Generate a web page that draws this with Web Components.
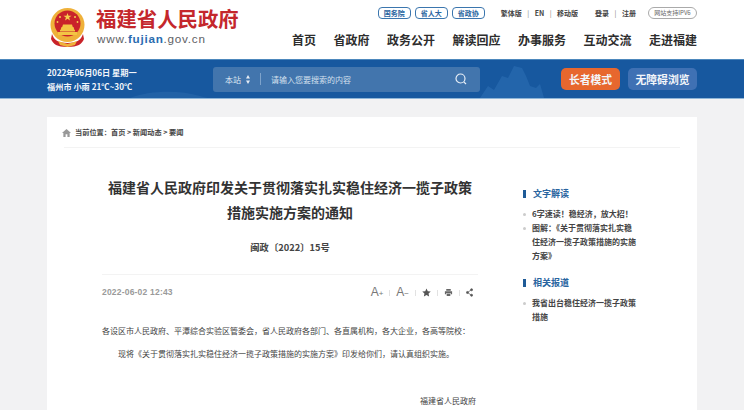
<!DOCTYPE html>
<html lang="zh">
<head>
<meta charset="utf-8">
<title>福建省人民政府</title>
<style>
html,body{margin:0;padding:0;background:#f2f2f3;height:410px;overflow:hidden}
body{font-family:"Noto Sans CJK SC","Liberation Sans",sans-serif;color:#333}
</style>
</head>
<body>
<site-header></site-header>
<tool-band></tool-band>
<page-main>
  <article-body slot="main"></article-body>
  <side-box slot="side" heading="文字解读">
    <li>6字速读！稳经济，放大招！</li>
    <li>图解：《关于贯彻落实扎实稳住经济一揽子政策措施的实施方案》</li>
  </side-box>
  <side-box slot="side" heading="相关报道">
    <li>我省出台稳住经济一揽子政策措施</li>
  </side-box>
</page-main>

<script>
class SiteHeader extends HTMLElement {
    constructor() {
        super()
        this.attachShadow({mode: "open"})
        this.shadowRoot.innerHTML = /*html*/`
        <style>
        :host{display:flex;height:59px;background:#fff;padding:0 47px 0 49px;justify-content:space-between;box-sizing:border-box}
        .brand{display:flex;gap:10px;padding-top:8px}
        .emblem{width:37px;height:40px;flex:none}
        .cn{font:700 20.4px/23px "Liberation Serif","Noto Sans CJK SC",serif;color:#c4272c;white-space:nowrap;padding-top:1px}
        .url{font:400 11.7px/14px "Liberation Sans",sans-serif;color:#5d6064;letter-spacing:.75px;margin:0 0 0 1px}
        .url b{font-weight:700;color:#2a6cb0}
        .right{display:flex;flex-direction:column;align-items:flex-end}
        .top{display:flex;align-items:center;height:14px;margin-top:6px;font-size:7px;line-height:14px;color:#444;font-weight:700;white-space:nowrap}
        .pills{display:flex;gap:4px;margin-right:16px}
        .pill{border:1px solid #3b76ae;border-radius:4px;color:#2a659f;font-weight:700;height:10px;line-height:10px;width:31px;text-align:center}
        .links{display:flex;gap:5.5px;margin-right:17px}
        .links i{font-style:normal;color:#777;font-weight:400}
        .ipv6{border:1px solid #aaa;border-radius:6px;height:10px;line-height:10px;width:47px;text-align:center;margin-left:12px;font-size:6px;font-weight:400;color:#666}
        nav{display:flex;gap:17.5px;margin-top:12px;font-weight:700;font-size:12px;line-height:16px;color:#2d2d2d;white-space:nowrap}
        </style>
        <div class="brand">
          <svg class="emblem" viewBox="0 0 37 40">
            <circle cx="18.5" cy="17" r="17" fill="#efb13a"/>
            <circle cx="18.5" cy="15.5" r="13" fill="#c9232a"/>
            <path d="M18.5 5l1 2.8h3l-2.4 1.8.9 2.9-2.5-1.7-2.5 1.7.9-2.9-2.4-1.8h3z" fill="#f6cf4e"/>
            <circle cx="11" cy="9" r="1" fill="#f6cf4e"/><circle cx="26" cy="9" r="1" fill="#f6cf4e"/>
            <circle cx="8.5" cy="14" r=".9" fill="#f6cf4e"/><circle cx="28.5" cy="14" r=".9" fill="#f6cf4e"/>
            <path d="M11 22h15v1.6H11zM12.5 19h12l1 3h-14zM14 16.5h9l.8 2.5H13.2zM9 24h19v3H9z" fill="#f3c544"/>
            <path d="M3 26c2 6 6 9 15.500 9S32 32 34 26l1 5c-2 5-6 8-16.500 8S4 36 2 31z" fill="#c9232a"/>
            <path d="M9 33l9.500 3 9.500-3-2 4-7.500 2-7.500-2z" fill="#efb13a"/>
          </svg>
          <div>
            <div class="cn">福建省人民政府</div>
            <div class="url">www.<b>fujian</b>.gov.cn</div>
          </div>
        </div>
        <div class="right">
          <div class="top">
            <div class="pills"><span class="pill">国务院</span><span class="pill">省人大</span><span class="pill">省政协</span></div>
            <div class="links"><span>繁体版</span><i>|</i><span>EN</span><i>|</i><span>移动版</span></div>
            <div class="links" style="margin-right:0"><span>登录</span><i>|</i><span>注册</span></div>
            <span class="ipv6">网站支持IPV6</span>
          </div>
          <nav><span>首页</span><span>省政府</span><span>政务公开</span><span>解读回应</span><span>办事服务</span><span>互动交流</span><span>走进福建</span></nav>
        </div>`
    }
}
customElements.define("site-header", SiteHeader)

class SearchBox extends HTMLElement {
    constructor() {
        super()
        this.attachShadow({mode: "open"})
        this.shadowRoot.innerHTML = /*html*/`
        <style>
        :host{display:flex;align-items:center;width:267px;height:25px;background:#4275ad;border-radius:3px;box-sizing:border-box;padding:0 13px 0 12px;color:#dfe8f2;font-size:8px;white-space:nowrap}
        .scope{display:flex;align-items:center;gap:5px;padding-right:10px;border-right:1px solid #7ea3cb;height:12px}
        .arrows{width:4px;height:9px}
        .hint{flex:1;padding-left:10px;color:#d4e0ee}
        svg.s{width:12px;height:12px}
        </style>
        <div class="scope"><span>本站</span>
          <svg class="arrows" viewBox="0 0 4 9"><path d="M2 0l2 3.500H0zM2 9L0 5.500h4z" fill="#e6edf5"/></svg>
        </div>
        <span class="hint">请输入您要搜索的内容</span>
        <svg class="s" viewBox="0 0 12 12" fill="none" stroke="#e8eff7" stroke-width="1.200"><circle cx="5.500" cy="5.500" r="4.500"/><path d="M8.800 8.800L11 11"/></svg>`
    }
}
customElements.define("search-box", SearchBox)

class ToolBand extends HTMLElement {
    constructor() {
        super()
        this.attachShadow({mode: "open"})
        this.shadowRoot.innerHTML = /*html*/`
        <style>
        :host{display:flex;align-items:center;position:relative;height:40px;box-sizing:border-box;background:#17589f;border-top:1px solid #4d88bd;border-bottom:1px solid #8fb6d8;padding:0 47px;overflow:hidden}
        .deco{position:absolute;left:0;top:0;width:744px;height:38px}
        .when{position:relative;width:166px;font-weight:700;font-size:8.200px;line-height:14px;color:#f2f6fa;white-space:nowrap}
        .btns{position:relative;display:flex;gap:8px;margin-left:auto}
        .btn{height:22px;line-height:22px;border-radius:5px;text-align:center;color:#f3f6fa;font-size:10.800px;font-weight:700;white-space:nowrap}
        .old{width:59px;background:#e7672e}
        .free{width:69px;background:#3f71b4}
        search-box{position:relative}
        </style>
        <svg class="deco" viewBox="0 0 744 38">
          <path d="M130 38c20-8 50-8 70-2s30 2 50 2z" fill="#2a69ab" opacity=".6"/>
          <path d="M480 38l8-12 6 4 8-14 6 2 6-12 8 2 4 8 4 10 6 2 4-4 4 14z" fill="#2a6bb0" opacity=".7"/>
        </svg>
        <div class="when">2022年06月06日 星期一<br>福州市 小雨 21℃~30℃</div>
        <search-box></search-box>
        <div class="btns"><div class="btn old">长者模式</div><div class="btn free">无障碍浏览</div></div>`
    }
}
customElements.define("tool-band", ToolBand)

class PageMain extends HTMLElement {
    constructor() {
        super()
        this.attachShadow({mode: "open"})
        this.shadowRoot.innerHTML = /*html*/`
        <style>
        :host{display:block;margin:18px 47px 0;background:#fff;height:293px;overflow:hidden;box-sizing:border-box;padding:0 17px}
        .crumb{display:flex;align-items:center;gap:4px;height:30px;border-bottom:1px solid #f3f3f3;font-size:7.200px;font-weight:700;color:#444;white-space:nowrap}
        .crumb svg{width:9px;height:9px;margin-left:-2px}
        .cols{display:flex}
        .main{width:414px;flex:none}
        .side{padding:39px 0 0 45px;width:122px;flex:none}
        </style>
        <div class="crumb">
          <svg viewBox="0 0 10 10"><path d="M5 1L0 5.500h1.500V10h2.500V7h2v3h2.500V5.500H10z" fill="#999"/></svg>
          <span>当前位置：首页 &gt; 新闻动态 &gt; 要闻</span>
        </div>
        <div class="cols">
          <div class="main"><slot name="main"></slot></div>
          <div class="side"><slot name="side"></slot></div>
        </div>`
    }
}
customElements.define("page-main", PageMain)

class ArticleBody extends HTMLElement {
    constructor() {
        super()
        this.attachShadow({mode: "open"})
        this.shadowRoot.innerHTML = /*html*/`
        <style>
        :host{display:block;padding-left:38px;width:376px;color:#333}
        h1{margin:27px 0 0;text-align:center;font-size:14px;line-height:25px;font-weight:700;color:#333}
        .no{margin-top:14px;text-align:center;font-size:9.300px;line-height:16px;font-weight:700;color:#444}
        .meta{display:flex;align-items:center;justify-content:space-between;margin-top:19px;border-top:1px solid #f3f3f3;padding-top:10px;height:15px}
        .date{font:700 8.500px/15px "Liberation Sans",sans-serif;color:#9a9a9a;letter-spacing:.2px}
        .ops{display:flex;align-items:center;margin-right:5px;color:#777}
        .ops span{font:400 12px/14px "Liberation Sans",sans-serif}
        .ops small{font-size:8px}
        .ops i{display:block;width:1px;height:6px;background:#e2e2e2;margin:0 6px}
        .ops svg{width:9px;height:9px;display:block}
        .ops svg.share{width:7px}
        p{margin:0;font-size:8px;line-height:23px;white-space:nowrap;color:#444}
        .first{margin-top:19px}
        .ind{padding-left:16px}
        .sign{margin-top:24px;text-align:right;padding-right:2px}
        </style>
        <h1>福建省人民政府印发关于贯彻落实扎实稳住经济一揽子政策<br>措施实施方案的通知</h1>
        <div class="no">闽政〔2022〕15号</div>
        <div class="meta">
          <span class="date">2022-06-02 12:43</span>
          <div class="ops">
            <span>A<small>+</small></span><i></i><span>A<small>−</small></span><i></i>
            <svg viewBox="0 0 10 10"><path d="M5 .5l1.400 3 3.300.4-2.400 2.200.6 3.300L5 7.800 2.100 9.400l.6-3.300L.3 3.900l3.300-.4z" fill="#555"/></svg><i></i>
            <svg viewBox="0 0 10 10"><path d="M2.500 1h5v2h-5zM1 3.500h8V7H7.500V5.500h-5V7H1zM3 6h4v3H3z" fill="#666"/></svg><i></i>
            <svg class="share" viewBox="0 0 10 13" fill="#555" stroke="#555" stroke-width="1"><circle cx="8" cy="2.500" r="1.500"/><circle cx="8" cy="10.500" r="1.500"/><circle cx="2" cy="6.500" r="1.500"/><path d="M8 2.500L2 6.500l6 4" fill="none"/></svg>
          </div>
        </div>
        <p class="first">各设区市人民政府、平潭综合实验区管委会，省人民政府各部门、各直属机构，各大企业，各高等院校：</p>
        <p class="ind">现将《关于贯彻落实扎实稳住经济一揽子政策措施的实施方案》印发给你们，请认真组织实施。</p>
        <p class="sign">福建省人民政府</p>`
    }
}
customElements.define("article-body", ArticleBody)

class SideBox extends HTMLElement {
    constructor() {
        super()
        this.attachShadow({mode: "open"})
        this.shadowRoot.innerHTML = /*html*/`
        <style>
        :host{display:block;margin-bottom:13px}
        h3{margin:0 0 6px;display:flex;align-items:center;gap:7px;font-size:9px;line-height:14px;font-weight:700;color:#2a659f;white-space:nowrap}
        h3::before{content:"";width:3px;height:8px;background:#1f5b97}
        ul{margin:0;padding:0}
        ::slotted(li){list-style:none;position:relative;font-size:8px;line-height:14px;font-weight:700;color:#444;padding-left:9px;width:104px;margin:0}
        </style>
        <h3>${this.getAttribute("heading")}</h3>
        <ul><slot></slot></ul>`
        this.dots()
    }

    dots(){
        const sheet = document.createElement("style")
        sheet.textContent = `side-box li::before{content:"";position:absolute;left:0;top:6px;width:3px;height:3px;border-radius:50%;background:#ccc}`
        document.head.appendChild(sheet)
    }
}
customElements.define("side-box", SideBox)
</script>
</body>
</html>
